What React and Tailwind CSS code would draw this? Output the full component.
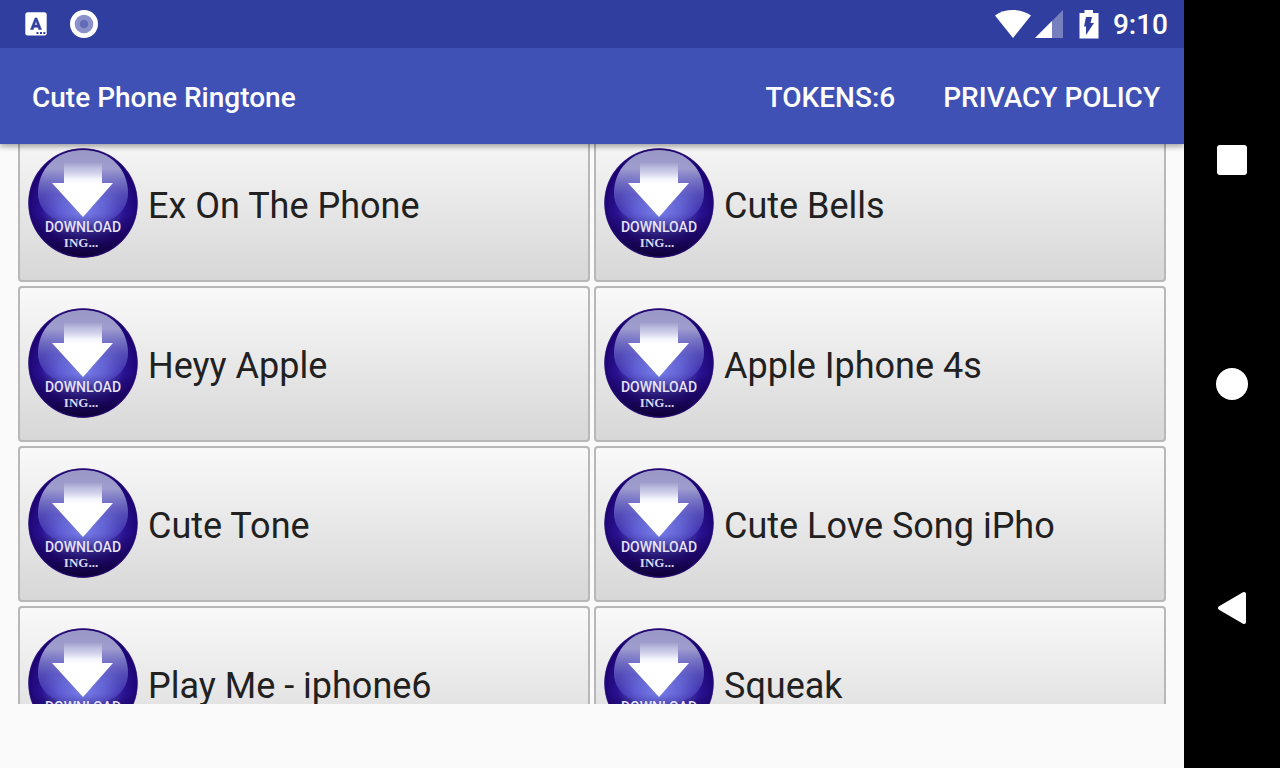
import React from 'react';

const ringtones = [
  'Ex On The Phone',
  'Cute Bells',
  'Heyy Apple',
  'Apple Iphone 4s',
  'Cute Tone',
  'Cute Love Song iPho',
  'Play Me - iphone6',
  'Squeak',
];

function BadgeGradients() {
  return (
    <svg className="absolute size-0" aria-hidden="true">
      <defs>
        <radialGradient id="ball" cx="0.5" cy="0.56" r="0.52">
          <stop offset="0" stopColor="#8088ee" />
          <stop offset="0.4" stopColor="#5a55cc" />
          <stop offset="0.72" stopColor="#2b1391" />
          <stop offset="1" stopColor="#1c0373" />
        </radialGradient>
        <linearGradient id="shade" x1="0" y1="0" x2="0" y2="1">
          <stop offset="0.6" stopColor="#14004f" stopOpacity="0" />
          <stop offset="0.8" stopColor="#14004f" stopOpacity="0.65" />
          <stop offset="1" stopColor="#0d0030" stopOpacity="0.95" />
        </linearGradient>
        <linearGradient id="gloss" x1="0" y1="0" x2="0" y2="1">
          <stop offset="0" stopColor="#9a98c6" />
          <stop offset="0.25" stopColor="#a3a4d2" stopOpacity="0.95" />
          <stop offset="0.6" stopColor="#6f72d4" stopOpacity="0.6" />
          <stop offset="1" stopColor="#6a70e8" stopOpacity="0.15" />
        </linearGradient>
        <linearGradient id="arrow" x1="0" y1="0" x2="0" y2="1">
          <stop offset="0" stopColor="#fff" stopOpacity="0" />
          <stop offset="0.3" stopColor="#fff" stopOpacity="0.9" />
          <stop offset="0.4" stopColor="#fff" />
        </linearGradient>
      </defs>
    </svg>
  );
}

function DownloadBadge() {
  return (
    <svg viewBox="0 0 110 110" className="size-[110px] shrink-0" aria-hidden="true">
      <circle cx="55" cy="55" r="54.5" fill="url(#ball)" />
      <circle cx="55" cy="55" r="54.5" fill="url(#shade)" />
      <path d="M55 2C83 2 100 22 100 45C100 65 82 77 55 77C28 77 10 65 10 45C10 22 27 2 55 2Z" fill="url(#gloss)" />
      <circle cx="55" cy="55" r="54" fill="none" stroke="#260a76" strokeOpacity="0.7" strokeWidth="1.5" />
      <path d="M36 14H74V35H85L55 69L24 35H36Z" fill="url(#arrow)" />
      <text x="55" y="84" textAnchor="middle" fill="#e6e2f6" className="font-[Roboto,sans-serif] text-[14px] font-medium">DOWNLOAD</text>
      <text x="53" y="99" textAnchor="middle" fill="#dcd8ee" className="font-['Liberation_Serif',serif] text-[13px] font-bold">ING...</text>
    </svg>
  );
}

function StatusBar() {
  return (
    <div className="relative z-20 flex h-12 shrink-0 items-center justify-between bg-[#303f9f] pr-4 pl-6">
      <div className="flex items-center gap-[22px]">
        <svg viewBox="0 0 24 24" className="size-6" aria-hidden="true">
          <rect x="1.3" y="0.3" width="21.4" height="23.2" rx="2.5" fill="#fff" />
          <path d="M6.500 17.500L11 6H13L17.500 17.500H14.700L14 15.300H10L9.300 17.500ZM10.700 13H13.300L12 9Z" fill="#303f9f" stroke="#303f9f" strokeWidth="0.5" fillRule="evenodd" />
          <path d="M12.500 20h2v2h-2zM16 20h2v2h-2zM19.300 20h2v2h-2z" fill="#303f9f" />
        </svg>
        <svg viewBox="0 0 28 28" className="size-7" aria-hidden="true">
          <circle cx="14" cy="14" r="14" fill="#fff" />
          <circle cx="14" cy="14" r="9.3" fill="#8a91ca" />
          <circle cx="14" cy="14" r="4.3" fill="#626bb7" />
        </svg>
      </div>
      <div className="flex items-center text-white">
        <svg viewBox="0 0 36 28" className="h-7 w-9" aria-hidden="true">
          <path d="M0 5.500C10-1.800 26-1.800 36 5.500L18 28Z" fill="#fff" />
        </svg>
        <svg viewBox="0 0 28 28" className="ml-1 size-7" aria-hidden="true">
          <path d="M28 0V28H0Z" fill="#7780bf" />
          <path d="M17 11V28H0Z" fill="#fff" />
        </svg>
        <svg viewBox="0 0 20 30" className="ml-4 h-[30px] w-5" aria-hidden="true">
          <path d="M5.500 1H14V4H19.500V29.500H.5V4H5.500Z" fill="#fff" />
          <path d="M7 8H13L11.500 14H15L7 26V17.500H5Z" fill="#303f9f" />
        </svg>
        <span className="ml-3.5 pt-0.5 text-[28px] leading-8 font-medium">9:10</span>
      </div>
    </div>
  );
}

function AppBar() {
  return (
    <header className="relative z-10 flex h-24 shrink-0 items-center justify-between bg-[#3f51b5] pt-1 pr-6 pl-8 text-[28px] leading-8 font-medium text-white shadow-[0_2px_6px_rgba(0,0,0,0.4)]">
      <h1>Cute Phone Ringtone</h1>
      <div className="flex items-center gap-12">
        <button type="button">TOKENS:6</button>
        <button type="button">PRIVACY POLICY</button>
      </div>
    </header>
  );
}

function RingtoneButton({ name }) {
  return (
    <button
      type="button"
      className="flex h-[156px] items-center gap-2.5 rounded-sm border-2 border-[#b8b8b8] bg-linear-to-b from-[#f9f9f9] to-[#d7d7d7] px-2 pb-0.5 text-left text-[36px] leading-10 text-[#212121]"
    >
      <DownloadBadge />
      <span className="min-w-0 truncate pt-1.5">{name}</span>
    </button>
  );
}

function NavigationBar() {
  return (
    <nav className="flex w-24 shrink-0 flex-col items-center justify-around bg-black py-12">
      <button type="button" aria-label="Recent apps" className="flex size-12 items-center justify-center">
        <span className="size-[30px] rounded-[3px] bg-white" />
      </button>
      <button type="button" aria-label="Home" className="flex size-12 items-center justify-center">
        <span className="size-8 rounded-full bg-white" />
      </button>
      <button type="button" aria-label="Back" className="flex size-12 items-center justify-center">
        <svg viewBox="0 0 32 36" className="h-9 w-8" aria-hidden="true">
          <path d="M4 18L28 4V32Z" fill="#fff" stroke="#fff" strokeWidth="4" strokeLinejoin="round" />
        </svg>
      </button>
    </nav>
  );
}

export default function App() {
  return (
    <div className="flex h-screen bg-[#fafafa] font-[Roboto,sans-serif]">
      <BadgeGradients />
      <div className="flex min-w-0 flex-1 flex-col">
        <StatusBar />
        <AppBar />
        <main className="min-h-0 flex-1 pb-16">
          <div className="h-full overflow-hidden px-[18px]">
            <div className="-mt-[18px] grid grid-cols-2 gap-1">
              {ringtones.map((name) => (
                <RingtoneButton key={name} name={name} />
              ))}
            </div>
          </div>
        </main>
      </div>
      <NavigationBar />
    </div>
  );
}
